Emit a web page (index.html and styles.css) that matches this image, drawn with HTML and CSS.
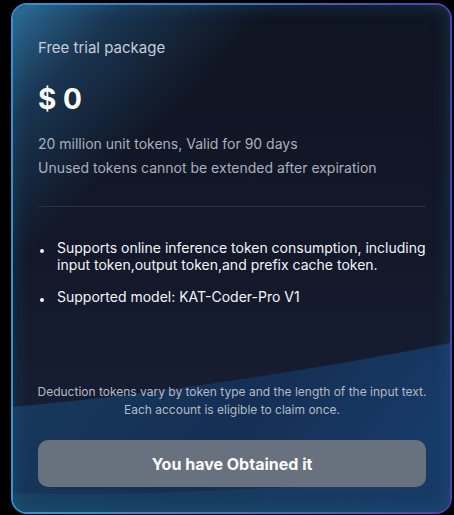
FILE: index.html
```html
<!DOCTYPE html>
<html lang="en">
<head>
<meta charset="utf-8">
<title>Free trial package</title>
<link rel="stylesheet" href="styles.css">
</head>
<body>
<div class="card">
  <svg class="waves" viewBox="0 0 437 507" preserveAspectRatio="none" aria-hidden="true">
    <defs>
      <linearGradient id="w1" x1="0" y1="0" x2="1" y2="0.3">
        <stop offset="0" stop-color="#173a5c"/>
        <stop offset="0.6" stop-color="#152f55"/>
        <stop offset="1" stop-color="#173a66"/>
      </linearGradient>
      <linearGradient id="w2" x1="0" y1="0" x2="1" y2="0">
        <stop offset="0" stop-color="#1a4a66"/>
        <stop offset="1" stop-color="#173a60"/>
      </linearGradient>
    </defs>
    <path d="M0 402 C 150 388, 300 365, 437 338 L437 507 L0 507 Z" fill="url(#w1)"/>
    <path d="M0 488 C 150 492, 300 482, 437 470 L437 507 L0 507 Z" fill="url(#w2)" opacity="0.6"/>
  </svg>
  <div class="glow"></div>
  <div class="content">
    <div class="title">Free trial package</div>
    <div class="price">$ 0</div>
    <div class="desc">
      <p>20 million unit tokens, Valid for 90 days</p>
      <p>Unused tokens cannot be extended after expiration</p>
    </div>
    <hr class="divider">
    <ul class="features">
      <li>Supports online inference token consumption, including input token,output token,and prefix cache token.</li>
      <li>Supported model: KAT-Coder-Pro V1</li>
    </ul>
    <div class="spacer"></div>
    <div class="note">
      <p>Deduction tokens vary by token type and the length of the input text.</p>
      <p>Each account is eligible to claim once.</p>
    </div>
    <button class="btn" type="button">You have Obtained it</button>
  </div>
</div>
</body>
</html>
```
FILE: styles.css
```css
* { box-sizing: border-box; }
html, body { margin: 0; padding: 0; background: #000; }
body {
  font-family: Inter, "Noto Sans", "Liberation Sans", sans-serif;
  width: 454px;
  height: 515px;
  overflow: hidden;
}
.card {
  position: relative;
  margin: 3px 2px 0 11px;
  width: 441px;
  height: 511px;
  border-radius: 16px;
  border: 2px solid transparent;
  background:
    linear-gradient(180deg, #0f1521 0%, #121829 45%, #161c30 70%, #15223a 100%) padding-box,
    linear-gradient(90deg, #2f95d6 0%, #3a78c8 50%, #4d3fb0 100%) border-box;
  overflow: hidden;
}
.waves {
  position: absolute;
  inset: 0;
  width: 100%;
  height: 100%;
}
.glow {
  position: absolute;
  inset: 0;
  border-radius: 14px;
  background: linear-gradient(135deg, rgba(52,130,180,0.8) 0%, rgba(40,100,150,0.4) 12%, rgba(20,40,70,0) 28%);
  box-shadow: inset 0 0 18px rgba(40,120,170,0.3);
  pointer-events: none;
}
.content {
  position: relative;
  display: flex;
  flex-direction: column;
  height: 100%;
  padding: 33px 24px 25px 25px;
}
.title {
  font-size: 15px;
  line-height: 20px;
  color: #c8ced8;
}
.price {
  margin-top: 24px;
  font-size: 28px;
  line-height: 34px;
  font-weight: 700;
  color: #ffffff;
}
.desc { margin-top: 16px; }
.desc p {
  margin: 0;
  font-size: 14px;
  line-height: 24px;
  color: #aab0bb;
}
.divider {
  margin: 26px 0 0;
  border: 0;
  border-top: 1px solid #2b3141;
}
.features {
  list-style: none;
  margin: 33px 0 0;
  padding: 0;
}
.features li {
  position: relative;
  padding-left: 19px;
  font-size: 14px;
  line-height: 16.5px;
  color: #f2f4f7;
}
.features li + li { margin-top: 16px; }
.features li::before {
  content: "";
  position: absolute;
  left: 2px;
  top: 9px;
  width: 4px;
  height: 4px;
  border-radius: 50%;
  background: #f2f4f7;
}
.spacer { flex: 1; }
.note { text-align: center; margin: 0 -4px; }
.note p {
  margin: 0;
  font-size: 12px;
  line-height: 18px;
  color: #b4bac4;
  white-space: nowrap;
}
.btn {
  margin-top: 21px;
  height: 47px;
  width: 100%;
  border: 0;
  border-radius: 10px;
  background: #68727e;
  color: #ffffff;
  font-family: inherit;
  font-size: 16px;
  font-weight: 700;
}
```
